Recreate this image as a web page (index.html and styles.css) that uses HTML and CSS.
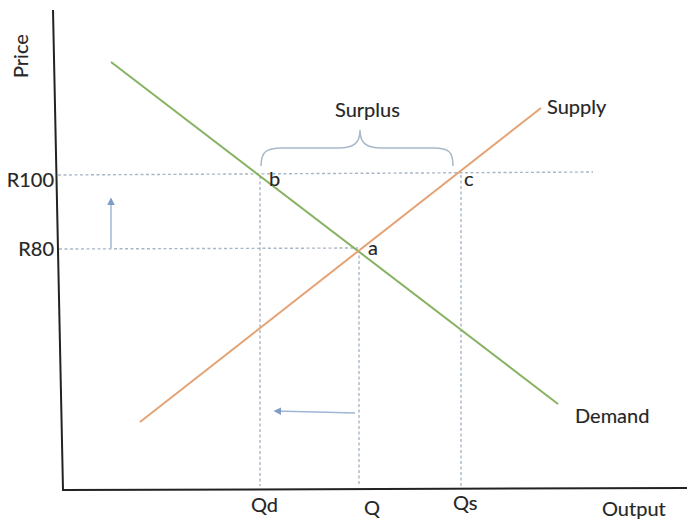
FILE: index.html
```html
<!DOCTYPE html>
<html>
<head>
<meta charset="utf-8">
<link rel="stylesheet" href="styles.css">
</head>
<body>
<div class="chart">
<svg class="diagram" width="688" height="522" viewBox="0 0 688 522" xmlns="http://www.w3.org/2000/svg">
  <defs>
    <marker id="head" viewBox="0 0 10 10" refX="8" refY="5" markerWidth="5" markerHeight="5" orient="auto">
      <path d="M0,0 L10,5 L0,10 z" class="arrow-head"/>
    </marker>
  </defs>
  <!-- guide lines -->
  <line class="guide" x1="58" y1="175" x2="593" y2="172"/>
  <line class="guide" x1="59" y1="249" x2="358" y2="248"/>
  <line class="guide" x1="260" y1="176" x2="260" y2="486"/>
  <line class="guide" x1="359" y1="250" x2="359" y2="486"/>
  <line class="guide" x1="461" y1="175" x2="461" y2="486"/>
  <!-- brace -->
  <path class="brace" d="M261,166 C261,152 266,148 282,148 L338,148 C354,148 360,143 360,130 C360,143 366,148 382,148 L434,148 C449,148 453,152 453,166"/>
  <!-- curves -->
  <line class="demand" x1="111" y1="62" x2="558" y2="404"/>
  <line class="supply" x1="140" y1="422" x2="541" y2="108"/>
  <!-- arrows -->
  <line class="arrow" x1="111" y1="248" x2="111" y2="199" marker-end="url(#head)"/>
  <line class="arrow" x1="355" y1="413" x2="275" y2="411" marker-end="url(#head)"/>
  <!-- axes -->
  <path class="axis" d="M53,10 L63,490 L687,488"/>
  <!-- labels -->
  <text class="label" transform="translate(28,78) rotate(-90)">Price</text>
  <text class="label end" x="54" y="187">R100</text>
  <text class="label end" x="54" y="256">R80</text>
  <text class="label" x="335" y="117">Surplus</text>
  <text class="label" x="547" y="114">Supply</text>
  <text class="label" x="269" y="186">b</text>
  <text class="label" x="464" y="186">c</text>
  <text class="label" x="368" y="255">a</text>
  <text class="label" x="575" y="423">Demand</text>
  <text class="label" x="251" y="512">Qd</text>
  <text class="label" x="364" y="515">Q</text>
  <text class="label" x="453" y="510">Qs</text>
  <text class="label" x="602" y="516">Output</text>
</svg>
</div>
</body>
</html>
```
FILE: styles.css
```css
html, body {
  margin: 0;
  padding: 0;
  background: #ffffff;
}
.chart {
  width: 688px;
  height: 522px;
  overflow: hidden;
}
.diagram {
  display: block;
}
.guide {
  stroke: #a8b6c6;
  stroke-width: 1.4;
  stroke-dasharray: 3 2.5;
  fill: none;
}
.brace {
  stroke: #a9b9c9;
  stroke-width: 1.5;
  fill: none;
}
.demand {
  stroke: #86b262;
  stroke-width: 2;
}
.supply {
  stroke: #e5a274;
  stroke-width: 2;
}
.arrow {
  stroke: #9fb6d4;
  stroke-width: 1.5;
}
.arrow-head {
  fill: #7e9cc4;
}
.axis {
  stroke: #222222;
  stroke-width: 2;
  fill: none;
}
.label {
  font-family: Lato, "Open Sans", sans-serif;
  font-size: 20px;
  fill: #262626;
  stroke: #262626;
  stroke-width: 0.15px;
}
.end {
  text-anchor: end;
}
```
